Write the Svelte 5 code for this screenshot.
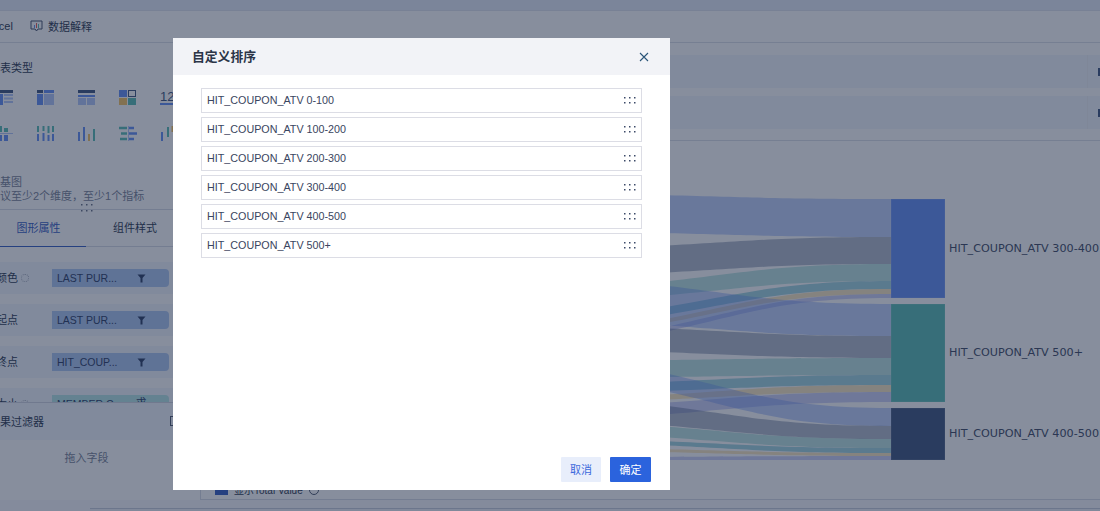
<script>
  const sortItems = [
    'HIT_COUPON_ATV 0-100',
    'HIT_COUPON_ATV 100-200',
    'HIT_COUPON_ATV 200-300',
    'HIT_COUPON_ATV 300-400',
    'HIT_COUPON_ATV 400-500',
    'HIT_COUPON_ATV 500+'
  ]

  const fields = [
    { label: '颜色', name: 'LAST PUR...', gear: true },
    { label: '起点', name: 'LAST PUR...' },
    { label: '终点', name: 'HIT_COUP...' },
    { label: '大小', name: 'MEMBER C...', gear: true, measure: true }
  ]

  const nodes = [
    { y: 199, h: 99, color: '#6992f4', label: 'HIT_COUPON_ATV 300-400' },
    { y: 304, h: 98, color: '#5fbeb6', label: 'HIT_COUPON_ATV 500+' },
    { y: 408, h: 52, color: '#455a82', label: 'HIT_COUPON_ATV 400-500' }
  ]

  // left edge top/bottom, right edge top/bottom
  const ribbons = [
    ['#6992f4', 195, 233, 199, 237],
    ['#455a82', 246, 273, 237, 264],
    ['#5fbeb6', 282, 296, 264, 281],
    ['#1e98b1', 308, 316, 281, 289],
    ['#f5c566', 320, 324, 289, 294],
    ['#878ee8', 328, 333, 294, 298],
    ['#6992f4', 285, 325, 304, 336],
    ['#455a82', 328, 352, 336, 358],
    ['#5fbeb6', 360, 377, 358, 375],
    ['#1e98b1', 382, 391, 375, 385],
    ['#f5c566', 395, 400, 385, 392],
    ['#878ee8', 403, 415, 392, 402],
    ['#6992f4', 372, 390, 408, 426],
    ['#455a82', 405, 425, 426, 439],
    ['#5fbeb6', 426, 437, 439, 448],
    ['#1e98b1', 441, 445, 448, 453],
    ['#f5c566', 449, 452, 453, 456],
    ['#878ee8', 457, 460, 456, 460]
  ]

  function ribbonPath([, a, b, c, d]) {
    const x0 = 660
    const x1 = 891
    const top = `M${x0} ${a}C${x0 + 90} ${a + (c - a) * 0.55} ${x1 - 110} ${c} ${x1} ${c}`
    const bottom = `L${x1} ${d}C${x1 - 110} ${d} ${x0 + 90} ${b + (d - b) * 0.55} ${x0} ${b}Z`
    return top + bottom
  }
</script>

<div class="page">
  <div class="topstrip"></div>

  <div class="toolbar">
    <span class="excel">Excel</span>
    <svg class="toolicon" width="13" height="12" viewBox="0 0 13 12">
      <path d="M1 1h11v8H8L6.500 11 5 9H1z" fill="none" stroke="#4a5670" />
      <rect x="4" y="5" width="1" height="3" fill="#6992f4" />
      <rect x="6" y="3" width="1" height="5" fill="#e0605a" />
      <rect x="8" y="4" width="1" height="4" fill="#5fbeb6" />
    </svg>
    <span>数据解释</span>
  </div>

  <div class="body">
    <aside class="sidebar">
      <section class="types">
        <h4>图表类型</h4>
        <div class="iconrow">
          <svg width="17" height="15" viewBox="0 0 17 15">
            <rect width="17" height="3" fill="#455a82" />
            <rect y="4" width="7" height="11" fill="#6992f4" />
            <path d="M8 5h9M8 8.500h9M8 12h9" stroke="#b4c8f8" stroke-width="2" />
          </svg>
          <svg width="17" height="15" viewBox="0 0 17 15">
            <rect width="6" height="3" fill="#455a82" />
            <rect x="7" width="10" height="3" fill="#6992f4" />
            <rect y="4" width="6" height="11" fill="#6992f4" />
            <rect x="7" y="4" width="10" height="11" fill="#b4c8f8" />
          </svg>
          <svg width="17" height="15" viewBox="0 0 17 15">
            <rect width="17" height="3" fill="#455a82" />
            <rect y="5" width="17" height="2" fill="#6992f4" />
            <rect y="8" width="8" height="7" fill="#b4c8f8" />
            <rect x="9" y="8" width="8" height="7" fill="#b4c8f8" />
          </svg>
          <svg width="17" height="15" viewBox="0 0 17 15">
            <rect width="8" height="7" fill="#6992f4" />
            <rect x="9.500" y=".5" width="7" height="6" fill="none" stroke="#455a82" />
            <rect y="8" width="8" height="7" fill="#f5c566" />
            <rect x="9" y="8" width="8" height="7" fill="#5fbeb6" />
          </svg>
          <span class="num">123</span>
        </div>
        <div class="iconrow second">
          <svg width="17" height="15" viewBox="0 0 17 15">
            <rect x="2" width="4" height="6" fill="#5fbeb6" />
            <rect x="2" y="9" width="4" height="6" fill="#6992f4" />
            <rect x="8" y="2" width="4" height="4" fill="#5fbeb6" />
            <rect x="8" y="9" width="4" height="6" fill="#6992f4" />
            <rect y="7" width="17" height="1" fill="#b4c8f8" />
          </svg>
          <svg width="17" height="15" viewBox="0 0 17 15">
            <path d="M1 0v6M6.500 0v5M11.500 0v7M16 0v6" stroke="#5fbeb6" stroke-width="2" />
            <path d="M1 8v7M6.500 7v8M11.500 9v6M16 8v7" stroke="#6992f4" stroke-width="2" />
          </svg>
          <svg width="17" height="15" viewBox="0 0 17 15">
            <path d="M1 6v9M6 1v14" stroke="#6992f4" stroke-width="2" />
            <path d="M11 8v7" stroke="#f5c566" stroke-width="2" />
            <path d="M16 3v12" stroke="#5fbeb6" stroke-width="2" />
          </svg>
          <svg width="18" height="15" viewBox="0 0 18 15">
            <path d="M0 2h8M2 7.500h6M1 13h7" stroke="#5fbeb6" stroke-width="2.500" />
            <path d="M10 2h5M10 7.500h8M10 13h5" stroke="#6992f4" stroke-width="2.500" />
            <rect x="9" width="1" height="15" fill="#b4c8f8" />
          </svg>
          <svg width="17" height="15" viewBox="0 0 17 15">
            <path d="M1 6v9" stroke="#6992f4" stroke-width="2" />
            <path d="M7 1v10" stroke="#5fbeb6" stroke-width="2" />
            <path d="M12 0v6" stroke="#f5c566" stroke-width="3" />
          </svg>
        </div>
        <p class="hint-title">桑基图</p>
        <p class="hint">建议至少2个维度，至少1个指标</p>
        <svg class="grip" width="12" height="8" viewBox="0 0 12 8">
          {#each [0, 5, 10] as x}
            {#each [0, 6] as y}
              <rect {x} {y} width="1.500" height="1.500" fill="#6b7488" />
            {/each}
          {/each}
        </svg>
      </section>

      <nav class="tabs">
        <span class="tab active">图形属性</span>
        <span class="tab">组件样式</span>
      </nav>

      <section class="fields">
        {#each fields as field}
          <div class="field">
            <span class="field-label">
              {field.label}
              {#if field.gear}<i class="gear"></i>{/if}
            </span>
            <span class="pill" class:measure={field.measure}>
              <span>{field.name}</span>
              {#if field.measure}
                <em>求</em>
              {:else}
                <svg width="9" height="9" viewBox="0 0 9 9"><path d="M.5 .5h8L5.500 4v4.500h-2V4z" fill="#33456b" /></svg>
              {/if}
            </span>
          </div>
        {/each}
      </section>

      <section class="filter">
        <div class="filter-head"><span>结果过滤器</span><i class="filter-more"></i></div>
        <div class="dropzone">拖入字段</div>
      </section>
    </aside>

    <main class="main">
      <div class="bands">
        <div class="band"><i></i></div>
        <div class="band"><i></i></div>
      </div>
      <svg class="chart" width="927" height="345" viewBox="173 141 927 345">
        {#each ribbons as r}
          <path d={ribbonPath(r)} fill={r[0]} opacity=".4" />
        {/each}
        {#each nodes as n}
          <rect x="891" y={n.y} width="54" height={n.h} fill={n.color} stroke="#fff" stroke-opacity=".15" />
          <text x="949" y={n.y + n.h / 2 + 3}>{n.label}</text>
        {/each}
      </svg>
      <div class="legendbox">
        <i class="check"></i>
        <span>显示Total Value</span>
        <i class="help"></i>
      </div>
    </main>
  </div>

  <div class="footer"><i></i></div>

  <div class="scrim"></div>

  <div class="modal">
    <header>
      <h3>自定义排序</h3>
      <svg width="10" height="10" viewBox="0 0 10 10">
        <path d="M1 1l8 8M9 1L1 9" stroke="#2a5578" stroke-width="1.100" fill="none" />
      </svg>
    </header>
    <ul>
      {#each sortItems as item}
        <li>
          <span>{item}</span>
          <svg width="12" height="7" viewBox="0 0 12 7">
            {#each [0, 5, 10] as x}
              {#each [0, 5] as y}
                <rect {x} {y} width="1.500" height="1.500" fill="#3c4a68" />
              {/each}
            {/each}
          </svg>
        </li>
      {/each}
    </ul>
    <footer>
      <button class="cancel">取消</button>
      <button class="ok">确定</button>
    </footer>
  </div>
</div>

<style>
  :global(body) {
    margin: 0;
    background: #fff;
  }
  .page {
    position: relative;
    width: 1100px;
    height: 511px;
    overflow: hidden;
    background: #fff;
    color: #333f55;
    font-family: 'Liberation Sans', 'Noto Sans CJK SC', sans-serif;
    font-size: 11px;
  }
  .topstrip {
    height: 10px;
    background: #e7ecf8;
    border-bottom: 1px solid #e0e4ee;
  }
  .toolbar {
    height: 29px;
    padding-bottom: 2px;
    display: flex;
    align-items: center;
    gap: 5px;
    border-bottom: 1px solid #dde0e8;
    box-sizing: content-box;
  }
  .excel {
    margin-left: -14px;
    margin-right: 12px;
  }
  .toolicon {
    flex: none;
  }
  .body {
    display: flex;
    height: 457px;
  }
  .sidebar {
    width: 173px;
    flex: none;
    display: flex;
    flex-direction: column;
  }
  .types {
    height: 167px;
    padding-top: 17px;
    box-sizing: border-box;
    position: relative;
    border-bottom: 1px solid #d8dce6;
  }
  h4 {
    margin: 0 0 14px -11px;
    font-weight: 400;
    font-size: 11px;
    line-height: 16px;
  }
  .iconrow {
    display: flex;
    gap: 24px;
    margin-left: -4px;
    height: 15px;
    align-items: flex-start;
  }
  .iconrow svg {
    flex: none;
  }
  .second {
    margin-top: 21px;
  }
  .num {
    color: #455a82;
    font-size: 13px;
    line-height: 13px;
    border-bottom: 2px solid #6992f4;
    padding-bottom: 0;
  }
  .hint-title,
  .hint {
    margin: 0 0 0 -11px;
    color: #7d8699;
    font-size: 11px;
    line-height: 14px;
    white-space: nowrap;
  }
  .hint-title {
    margin-top: 34px;
  }
  .grip {
    position: absolute;
    left: 81px;
    bottom: -3px;
  }
  .tabs {
    display: flex;
    height: 36px;
    border-bottom: 1px solid #d8dce6;
  }
  .tab {
    width: 86px;
    text-align: center;
    line-height: 36px;
    box-sizing: border-box;
  }
  .tab:first-child {
    text-indent: -9px;
  }
  .tab:last-child {
    text-indent: 12px;
  }
  .active {
    color: #3b62c4;
    border-bottom: 1px solid #3b62c4;
    height: 37px;
  }
  .fields {
    height: 156px;
    padding-top: 15px;
    box-sizing: border-box;
    overflow: hidden;
    border-bottom: 1px solid #d0d5e0;
  }
  .field {
    height: 32px;
    margin-bottom: 10px;
    padding-top: 7px;
    box-sizing: border-box;
    display: flex;
    align-items: flex-start;
    background: #f3f6fc;
  }
  .field-label {
    width: 56px;
    height: 18px;
    line-height: 18px;
    margin-left: -4px;
    flex: none;
    display: flex;
    align-items: center;
    gap: 3px;
    white-space: nowrap;
  }
  .gear {
    width: 6px;
    height: 6px;
    border: 1px dotted #a6aebd;
    border-radius: 50%;
    flex: none;
  }
  .pill {
    width: 117px;
    height: 18px;
    background: #afc8f0;
    border-radius: 0 4px 4px 0;
    color: #33456b;
    font-size: 10.500px;
    line-height: 18px;
    padding: 0 0 0 5px;
    box-sizing: border-box;
    display: flex;
    align-items: center;
    white-space: nowrap;
  }
  .pill span {
    width: 80px;
  }
  .pill em {
    font-style: normal;
    margin-top: -4px;
    margin-left: -1px;
  }
  .measure {
    background: #b9e6e6;
  }
  .filter {
    flex: 1;
  }
  .filter-head {
    height: 35px;
    padding-bottom: 2px;
    display: flex;
    justify-content: space-between;
    align-items: center;
    margin-left: -11px;
    background: #f3f6fc;
  }
  .filter-more {
    width: 8px;
    height: 8px;
    border: 1px solid #555f75;
    margin-right: -7px;
  }
  .dropzone {
    height: 36px;
    line-height: 36px;
    text-align: center;
    color: #7d8699;
    width: 173px;
  }
  .main {
    flex: 1;
    min-width: 0;
    display: flex;
    flex-direction: column;
  }
  .bands {
    height: 98px;
    padding-top: 12px;
    box-sizing: border-box;
    border-bottom: 1px solid #dde0e8;
    display: flex;
    flex-direction: column;
    gap: 8px;
  }
  .band {
    height: 33px;
    background: #f3f6fc;
    display: flex;
    justify-content: flex-end;
  }
  .band i {
    width: 12px;
    border-left: 1px solid #eef0f5;
    background: linear-gradient(90deg, transparent 10px, #455a82 10px) no-repeat center / 100% 8px;
  }
  .chart {
    display: block;
    flex: none;
    font-family: 'DejaVu Sans', sans-serif;
    font-size: 11.200px;
  }
  .chart text {
    fill: #47516a;
  }
  .legendbox {
    margin-left: 27px;
    height: 14px;
    border-left: 1px solid #d8dce6;
    border-bottom: 1px solid #d8dce6;
    display: flex;
    align-items: flex-end;
    gap: 6px;
    padding: 0 0 4px 14px;
    font-size: 10px;
    line-height: 9px;
    overflow: hidden;
    box-sizing: border-box;
  }
  .check {
    width: 13px;
    height: 9px;
    background: #3b62c4;
    flex: none;
  }
  .help {
    width: 8px;
    height: 8px;
    border: 1px solid #555f75;
    border-radius: 50%;
  }
  .footer {
    height: 12px;
    padding-top: 8px;
    box-sizing: border-box;
    background: #f8f9fc;
  }
  .footer i {
    display: block;
    height: 4px;
    margin-left: 90px;
    border-top: 1px solid #c9cfdd;
    background: #f0f2f8;
  }
  .scrim {
    position: absolute;
    inset: 0;
    background: rgba(15, 30, 60, 0.5);
    backdrop-filter: blur(0.5px);
  }
  .modal {
    position: absolute;
    left: 173px;
    top: 38px;
    width: 497px;
    height: 452px;
    background: #fff;
    display: flex;
    flex-direction: column;
  }
  header {
    height: 35px;
    padding: 0 21px 2px 19px;
    flex: none;
    background: #f2f3f7;
    display: flex;
    align-items: center;
    justify-content: space-between;
  }
  header svg {
    margin-top: 2px;
  }
  h3 {
    margin: 0;
    font-size: 12.800px;
    font-weight: 700;
    color: #2b3548;
  }
  ul {
    list-style: none;
    margin: 0;
    padding: 13px 28px 0;
    flex: 1;
  }
  li {
    height: 25px;
    margin-bottom: 4px;
    border: 1px solid #dcdde5;
    box-sizing: border-box;
    display: flex;
    align-items: center;
    justify-content: space-between;
    padding: 0 5px;
    font-size: 10.750px;
    color: #3a4560;
  }
  li span {
    margin-top: -2px;
  }
  footer {
    display: flex;
    justify-content: flex-end;
    gap: 9px;
    padding: 0 19px 8px 0;
  }
  button {
    height: 25px;
    border: 0;
    border-radius: 1px;
    font: inherit;
    font-size: 11px;
    padding: 0 0 2px;
  }
  .cancel {
    width: 40px;
    background: #e8eefb;
    color: #3b68dc;
  }
  .ok {
    width: 41px;
    background: #2b63dd;
    color: #fff;
  }
</style>
